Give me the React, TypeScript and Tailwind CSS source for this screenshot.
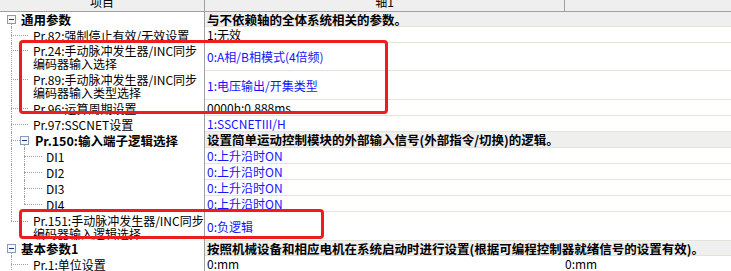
import type { ReactNode } from "react";

type Mode = "full" | "top" | "bottom";
type Tree = { v1?: Mode; v2?: Mode; h?: [number, number]; hy?: number; box?: number };
type Row = {
  h: number;
  group?: boolean;
  bold?: boolean;
  pl: number;
  label: ReactNode;
  value?: ReactNode;
  value2?: ReactNode;
  blue?: boolean;
  grayValue?: boolean;
  tree: Tree;
};

const rows: Row[] = [
  { h: 15, group: true, pl: 21, label: "通用参数", value: "与不依赖轴的全体系统相关的参数。", tree: { v1: "bottom", box: 7 } },
  { h: 16, pl: 33, label: "Pr.82:强制停止有效/无效设置", value: "1:无效", tree: { v1: "full", h: [11, 28] } },
  {
    h: 28,
    pl: 33,
    label: (
      <>
        Pr.24:手动脉冲发生器/INC同步
        <br />
        编码器输入选择
      </>
    ),
    value: "0:A相/B相模式(4倍频)",
    blue: true,
    tree: { v1: "full", h: [11, 28], hy: 7 },
  },
  {
    h: 29,
    pl: 33,
    label: (
      <>
        Pr.89:手动脉冲发生器/INC同步
        <br />
        编码器输入类型选择
      </>
    ),
    value: "1:电压输出/开集类型",
    blue: true,
    tree: { v1: "full", h: [11, 28], hy: 8 },
  },
  { h: 16, pl: 33, label: "Pr.96:运算周期设置", value: "0000h:0.888ms", tree: { v1: "full", h: [11, 28] } },
  { h: 16, pl: 33, label: "Pr.97:SSCNET设置", value: "1:SSCNETIII/H", blue: true, tree: { v1: "full", h: [11, 28] } },
  {
    h: 16,
    bold: true,
    grayValue: true,
    pl: 35,
    label: "Pr.150:输入端子逻辑选择",
    value: "设置简单运动控制模块的外部输入信号(外部指令/切换)的逻辑。",
    tree: { v1: "full", h: [11, 20], box: 20, v2: "bottom" },
  },
  { h: 16, pl: 46, label: "DI1", value: "0:上升沿时ON", blue: true, tree: { v1: "full", v2: "full", h: [24, 42] } },
  { h: 16, pl: 46, label: "DI2", value: "0:上升沿时ON", blue: true, tree: { v1: "full", v2: "full", h: [24, 42] } },
  { h: 16, pl: 46, label: "DI3", value: "0:上升沿时ON", blue: true, tree: { v1: "full", v2: "full", h: [24, 42] } },
  { h: 16, pl: 46, label: "DI4", value: "0:上升沿时ON", blue: true, tree: { v1: "full", v2: "top", h: [24, 42] } },
  {
    h: 29,
    pl: 33,
    label: (
      <>
        Pr.151:手动脉冲发生器/INC同步
        <br />
        编码器输入逻辑选择
      </>
    ),
    value: "0:负逻辑",
    blue: true,
    tree: { v1: "top", h: [11, 28], hy: 9 },
  },
  {
    h: 15,
    group: true,
    pl: 21,
    label: "基本参数1",
    value: "按照机械设备和相应电机在系统启动时进行设置(根据可编程控制器就绪信号的设置有效)。",
    tree: { v1: "bottom", box: 7 },
  },
  { h: 16, pl: 33, label: "Pr.1:单位设置", value: "0:mm", value2: "0:mm", tree: { v1: "full", h: [11, 28] } },
];

function ExpandBox({ x, y }: { x: number; y: number }) {
  return (
    <svg className="absolute" style={{ left: x, top: y }} width="9" height="9" viewBox="0 0 9 9">
      <rect x="0.5" y="0.5" width="8" height="8" fill="#f7f7f7" stroke="#8c9cae" />
      <path d="M2 4.5h5" stroke="#1b2f8a" />
    </svg>
  );
}

function Guides({ t, h }: { t: Tree; h: number }) {
  const hy = t.hy ?? Math.floor(h / 2);
  const vline = (x: number, mode: Mode | undefined, boxed: boolean) => {
    if (!mode) return null;
    const top = mode === "bottom" ? (boxed ? hy + 5 : hy) : 0;
    const bottom = mode === "top" ? h - hy : 0;
    return (
      <div
        className="absolute border-l border-dotted border-[#a0a0a0]"
        style={{ left: x, top, bottom }}
      />
    );
  };
  return (
    <>
      {vline(11, t.v1, t.box === 7)}
      {vline(24, t.v2, t.box === 20)}
      {t.h && (
        <div
          className="absolute border-t border-dotted border-[#a0a0a0]"
          style={{ left: t.h[0], width: t.h[1] - t.h[0], top: hy }}
        />
      )}
      {t.box !== undefined && <ExpandBox x={t.box} y={hy - 4} />}
    </>
  );
}

function TableRow({ r }: { r: Row }) {
  const bold = r.group || r.bold;
  const grayVal = r.group || r.grayValue;
  return (
    <div className="flex" style={{ height: r.h }}>
      <div
        className={`relative flex w-[205px] shrink-0 items-center border-r border-[#a0a0a0] ${
          bold ? "text-[12.5px] font-bold" : ""
        }`}
        style={{ paddingLeft: r.pl }}
      >
        <Guides t={r.tree} h={r.h} />
        <div className="relative whitespace-nowrap">{r.label}</div>
      </div>
      {grayVal ? (
        <div className="flex flex-1 items-center whitespace-nowrap border-b border-[#e3e3d8] bg-[#efefef] pl-[2px] text-[12.5px] font-bold">
          {r.value}
        </div>
      ) : (
        <>
          <div
            className={`flex w-[358px] shrink-0 items-center whitespace-nowrap border-b border-[#e3e3d8] pl-[2px] ${
              r.blue ? "text-[#1414ff]" : ""
            }`}
          >
            {r.value}
          </div>
          <div className="flex flex-1 items-center whitespace-nowrap border-b border-[#e3e3d8] pl-[2px]">
            {r.value2}
          </div>
        </>
      )}
    </div>
  );
}

export default function App() {
  return (
    <div className="relative h-[271px] w-[731px] overflow-hidden bg-white font-['Noto_Sans_CJK_SC','Liberation_Sans',sans-serif] text-[12px] leading-[13px] text-black">
      {/* header, scrolled so its top is cut */}
      <div className="flex h-[12px] overflow-hidden border-b border-[#a0a0a0] bg-[#efefef]">
        <div className="flex w-[205px] shrink-0 justify-center border-r border-[#a0a0a0]">
          <span className="-mt-[5px]">项目</span>
        </div>
        <div className="flex w-[360px] shrink-0 justify-center border-r border-[#a0a0a0]">
          <span className="-mt-[5px]">轴1</span>
        </div>
        <div className="flex-1" />
      </div>

      {rows.map((r, i) => (
        <TableRow key={i} r={r} />
      ))}

      {/* red highlight boxes drawn over the grid */}
      <div className="absolute left-[19px] top-[40px] h-[74px] w-[369px] rounded-[4px] border-[3px] border-[#ee1c1c]" />
      <div className="absolute left-[19px] top-[209px] h-[30px] w-[305px] rounded-[4px] border-[3px] border-[#ee1c1c]" />
    </div>
  );
}
